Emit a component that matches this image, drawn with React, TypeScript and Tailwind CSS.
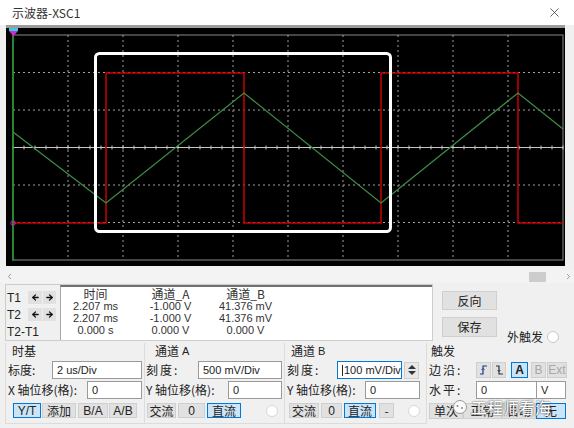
import { ArrowLeft, ArrowRight, ChevronLeft, ChevronRight, X } from "lucide-react"
import clsx from "clsx"
import type { ReactNode } from "react"

const latin = "font-['Liberation_Sans',sans-serif]"

const vLines = [68, 123, 178, 233, 288, 343, 398, 453, 508]
const hLines = [72.5, 110, 185, 222.5]
const ticks = Array.from({ length: 51 }, (_, i) => 13 + i * 11)

const square = "13,223 106,223 106,73 244,73 244,223 381,223 381,73 518,73 518,223 563,223"
const triangle = "13,132 106,203 244,93 381,203 518,93 563,129"

const Btn = ({ w, on, off, children, className }: { w: string; on?: boolean; off?: boolean; children: ReactNode; className?: string }) => (
  <div
    className={clsx(
      "flex h-full shrink-0 items-center justify-center border text-[12px] leading-none",
      w,
      on ? "border-[#0078d7] bg-[#cce4f7]" : "border-[#cfcfcf] bg-[#e1e1e1]",
      off ? "text-[#a8a8a8]" : "text-[#222]",
      className
    )}
  >
    {children}
  </div>
)

const Field = ({ w, value, focus, className }: { w: string; value: string; focus?: boolean; className?: string }) => (
  <div
    className={clsx(
      "flex h-[18px] shrink-0 items-center border bg-white pl-[4px] text-[11px] text-[#222]",
      latin,
      w,
      focus ? "border-[#0078d7]" : "border-[#9a9a9a]",
      className
    )}
  >
    {focus && <span className="mr-[1px] h-[11px] w-px bg-[#222]" />}
    {value}
  </div>
)

const Radio = ({ className }: { className?: string }) => (
  <div className={clsx("h-[12px] w-[12px] shrink-0 rounded-full border border-[#c8c8c8] bg-white", className)} />
)

const Screen = () => (
  <div className="ml-[6px] h-[241px] w-[559px] border-t-[3px] border-[#9c9c9c] bg-black">
    <svg width="559" height="238" viewBox="6 28 559 238">
      <rect x="13" y="35" width="550" height="225" fill="none" stroke="#8a8a8a" strokeWidth="1" />
      {vLines.map((x) => (
        <line key={x} x1={x} y1="35" x2={x} y2="260" stroke="#a0a0a0" strokeDasharray="2 3" />
      ))}
      {hLines.map((y) => (
        <line key={y} x1="13" y1={y} x2="563" y2={y} stroke="#a0a0a0" strokeDasharray="2 3" />
      ))}
      <line x1="13" y1="147.5" x2="563" y2="147.5" stroke="#c8c8c8" />
      {ticks.map((x) => (
        <line key={x} x1={x} y1="145.5" x2={x} y2="149.5" stroke="#c8c8c8" />
      ))}
      <polyline points={square} fill="none" stroke="#c80000" strokeWidth="1.5" />
      <polyline points={triangle} fill="none" stroke="#3c8c46" strokeWidth="1.3" />
      <line x1="13" y1="30" x2="13" y2="261" stroke="#1e9a28" strokeWidth="1.5" />
      <rect x="9" y="28" width="9" height="3" fill="#30d0e0" />
      <polygon points="9,31 18,31 13.5,36" fill="#e020e0" />
      <circle cx="13" cy="223" r="2.2" fill="none" stroke="#d020d0" strokeWidth="1" />
      <rect x="95.5" y="53.5" width="295" height="178" rx="4" fill="none" stroke="#ffffff" strokeWidth="3" />
    </svg>
  </div>
)

const Readout = () => (
  <div className="mt-[1px] flex h-[57px]">
    <div className="ml-[5px] flex w-[428px] border border-[#cdcdcd]">
      <div className="flex w-[54px] flex-col text-[12px] text-[#222]">
        {["T1", "T2"].map((t, i) => (
          <div key={t} className={clsx("flex h-[13px] items-center", i === 0 ? "mt-[6px]" : "mt-[4px]")}>
            <span className={clsx("w-[22px] pl-[1px]", latin)}>{t}</span>
            <div className="flex h-full w-[14px] items-center justify-center bg-[#e1e1e1]">
              <ArrowLeft size={9} strokeWidth={3.5} color="#111" />
            </div>
            <div className="ml-px flex h-full w-[13px] items-center justify-center bg-[#e1e1e1]">
              <ArrowRight size={9} strokeWidth={3.5} color="#111" />
            </div>
          </div>
        ))}
        <div className={clsx("mt-[4px] flex h-[14px] items-center pl-[1px]", latin)}>T2-T1</div>
      </div>
      <div className="flex-1 border-t-2 border-l border-t-[#707070] border-l-[#a8a8a8] bg-white">
        <div className="-ml-[3px] grid w-[225px] grid-cols-3 text-center text-[#333]">
          {["时间", "通道_A", "通道_B"].map((h) => (
            <div key={h} className="h-[13px] text-[12px] leading-[13px]">{h}</div>
          ))}
          {[
            "2.207 ms", "-1.000 V", "41.376 mV",
            "2.207 ms", "-1.000 V", "41.376 mV",
            "0.000 s", "0.000 V", "0.000 V",
          ].map((v, i) => (
            <div key={i} className={clsx("h-[12px] text-[11px] leading-[12px]", latin)}>{v}</div>
          ))}
        </div>
      </div>
    </div>
    <div className="ml-[9px] flex w-[55px] flex-col">
      <Btn w="w-[55px]" className="mt-[7px] !h-[19px]">反向</Btn>
      <Btn w="w-[55px]" className="mt-[7px] !h-[20px]">保存</Btn>
    </div>
    <div className="ml-[10px] flex items-end">
      <div className="-mb-[5px] flex items-center gap-[4px] text-[12px] text-[#222]">
        <span>外触发</span>
        <Radio />
      </div>
    </div>
  </div>
)

const Controls = () => (
  <div className="mt-[2px] flex h-[81px] text-[12px] text-[#222]">
    <div className="ml-[5px] flex w-[140px] flex-col border-x border-b border-[#dcdcdc] px-[2px]">
      <div className="flex h-[16px] items-center pl-[4px]">时基</div>
      <div className="mt-[2px] flex h-[18px] items-center justify-between">
        <span>标度:</span>
        <Field w="w-[90px]" value="2 us/Div" />
      </div>
      <div className="mt-[2px] flex h-[18px] items-center justify-between">
        <span>X 轴位移(格):</span>
        <Field w="w-[55px]" value="0" />
      </div>
      <div className={clsx("mt-[4px] flex h-[15px]", latin)}>
        <Btn w="w-[28px]" on className="ml-[5px] text-[11px]">Y/T</Btn>
        <Btn w="w-[34px]" className="ml-[1px] font-['Noto_Sans_CJK_SC']">添加</Btn>
        <Btn w="w-[30px]" className="ml-[2px] text-[11px]">B/A</Btn>
        <Btn w="w-[28px]" className="ml-[1px] text-[11px]">A/B</Btn>
      </div>
    </div>

    <div className="flex w-[140px] flex-col border-r border-b border-[#dcdcdc] pl-[1px] pr-[2px]">
      <div className="flex h-[16px] items-center pl-[9px]">
        通道 <span className={clsx("ml-[3px] text-[11px]", latin)}>A</span>
      </div>
      <div className="mt-[2px] flex h-[18px] items-center justify-between">
        <span className="tracking-[2px]">刻度:</span>
        <Field w="w-[84px]" value="500 mV/Div" />
      </div>
      <div className="mt-[2px] flex h-[18px] items-center justify-between">
        <span>Y 轴位移(格):</span>
        <Field w="w-[54px]" value="0" />
      </div>
      <div className="mt-[4px] flex h-[15px] items-center">
        <Btn w="w-[29px]" className="ml-[1px]">交流</Btn>
        <Btn w="w-[27px]" className={clsx("ml-[2px] text-[11px]", latin)}>0</Btn>
        <Btn w="w-[34px]" on className="ml-[2px]">直流</Btn>
        <Radio className="ml-auto mr-[4px] border-[#d8d8d8] bg-[#f4f4f4]" />
      </div>
    </div>

    <div className="flex w-[142px] flex-col border-r border-b border-[#dcdcdc] pl-[2px] pr-[6px]">
      <div className="flex h-[16px] items-center pl-[4px]">
        通道 <span className={clsx("ml-[3px] text-[11px]", latin)}>B</span>
      </div>
      <div className="mt-[2px] flex h-[18px] items-center justify-between">
        <span className="tracking-[2px]">刻度:</span>
        <div className="flex items-center">
          <Field w="w-[65px]" value="100 mV/Div" focus />
          <div className="ml-[2px] mr-px flex h-[17px] w-[15px] flex-col items-center justify-center gap-[2px] border border-[#cfcfcf] bg-[#e8e8e8]">
            <div className="h-0 w-0 border-x-[4px] border-b-[4px] border-x-transparent border-b-[#333]" />
            <div className="h-0 w-0 border-x-[4px] border-t-[4px] border-x-transparent border-t-[#333]" />
          </div>
        </div>
      </div>
      <div className="mt-[2px] flex h-[18px] items-center justify-between">
        <span>Y 轴位移(格):</span>
        <Field w="w-[55px]" value="0" />
      </div>
      <div className="mt-[4px] flex h-[15px] items-center">
        <Btn w="w-[30px]" className="ml-[2px]">交流</Btn>
        <Btn w="w-[21px]" className={clsx("ml-[2px] text-[11px]", latin)}>0</Btn>
        <Btn w="w-[32px]" on className="ml-[2px]">直流</Btn>
        <Btn w="w-[15px]" className="ml-[3px]">-</Btn>
        <Radio className="ml-auto border-[#d8d8d8] bg-[#f4f4f4]" />
      </div>
    </div>

    <div className="flex w-[147px] flex-col pl-[2px]">
      <div className="flex h-[16px] items-center pl-[2px]">触发</div>
      <div className="mt-[2px] flex h-[18px] items-center">
        <span className="w-[47px] tracking-[2px]">边沿:</span>
        <div className="flex h-[16px] items-center">
          <Btn w="w-[15px]">
            <svg width="9" height="10" viewBox="0 0 9 10">
              <path d="M1 9 H4 V1 H8" fill="none" stroke="#1a3e8c" strokeWidth="1.2" />
              <path d="M2.5 5 L4 3.5 L5.5 5" fill="none" stroke="#1a3e8c" strokeWidth="1" />
            </svg>
          </Btn>
          <Btn w="w-[14px]" className="ml-px">
            <svg width="9" height="10" viewBox="0 0 9 10">
              <path d="M1 1 H4 V9 H8" fill="none" stroke="#333" strokeWidth="1.2" />
              <path d="M2.5 5 L4 6.5 L5.5 5" fill="none" stroke="#333" strokeWidth="1" />
            </svg>
          </Btn>
          <Btn w="w-[17px]" on className={clsx("ml-[5px] text-[11px] font-bold", latin)}>A</Btn>
          <Btn w="w-[15px]" off className={clsx("ml-[3px] text-[11px]", latin)}>B</Btn>
          <Btn w="w-[20px]" off className={clsx("ml-px text-[11px]", latin)}>Ext</Btn>
        </div>
      </div>
      <div className="mt-[2px] flex h-[18px] items-center">
        <span className="w-[47px] tracking-[2px]">水平:</span>
        <Field w="w-[61px]" value="0" />
        <Field w="w-[30px]" value="V" className="-ml-px" />
      </div>
      <div className="mt-[4px] flex h-[16px] items-center">
        <Btn w="w-[34px]">单次</Btn>
        <Btn w="w-[39px]">正常</Btn>
        <Btn w="w-[34px]">自动</Btn>
        <Btn w="w-[30px]" on>无</Btn>
      </div>
    </div>
  </div>
)

export default function App() {
  return (
    <div className="relative h-[428px] w-[574px] overflow-hidden bg-[#f0f0f0] font-['Noto_Sans_CJK_SC',sans-serif]">
      <div className="flex h-[25px] items-center justify-between bg-white pl-[12px] pr-[12px]">
        <span className="text-[12px] text-[#333]">示波器-XSC1</span>
        <X size={15} strokeWidth={1.2} color="#333" />
      </div>

      <Screen />

      <div className="mt-[4px] flex h-[13px] items-center bg-[#f3f3f3] text-[#777]">
        <ChevronLeft size={9} strokeWidth={2} className="ml-[5px]" />
        <div className="ml-auto mr-[18px] h-[10px] w-[17px] bg-[#cdcdcd]" />
        <ChevronRight size={9} strokeWidth={2} className="mr-[1px]" />
      </div>

      <Readout />
      <Controls />

      <div className="absolute left-[452px] top-[399px] flex items-center gap-[1px] text-[16px] leading-none text-white [text-shadow:0_0_2px_#555,0_0_1px_#555]">
        <svg width="18" height="16" viewBox="0 0 18 16">
          <circle cx="8" cy="8" r="6.5" fill="#fafafa" stroke="#9a9a9a" strokeWidth="1" />
          <circle cx="5.5" cy="7" r="1" fill="#888" />
          <circle cx="10" cy="9" r="1" fill="#888" />
        </svg>
        <span>工程师看海</span>
      </div>
    </div>
  )
}
